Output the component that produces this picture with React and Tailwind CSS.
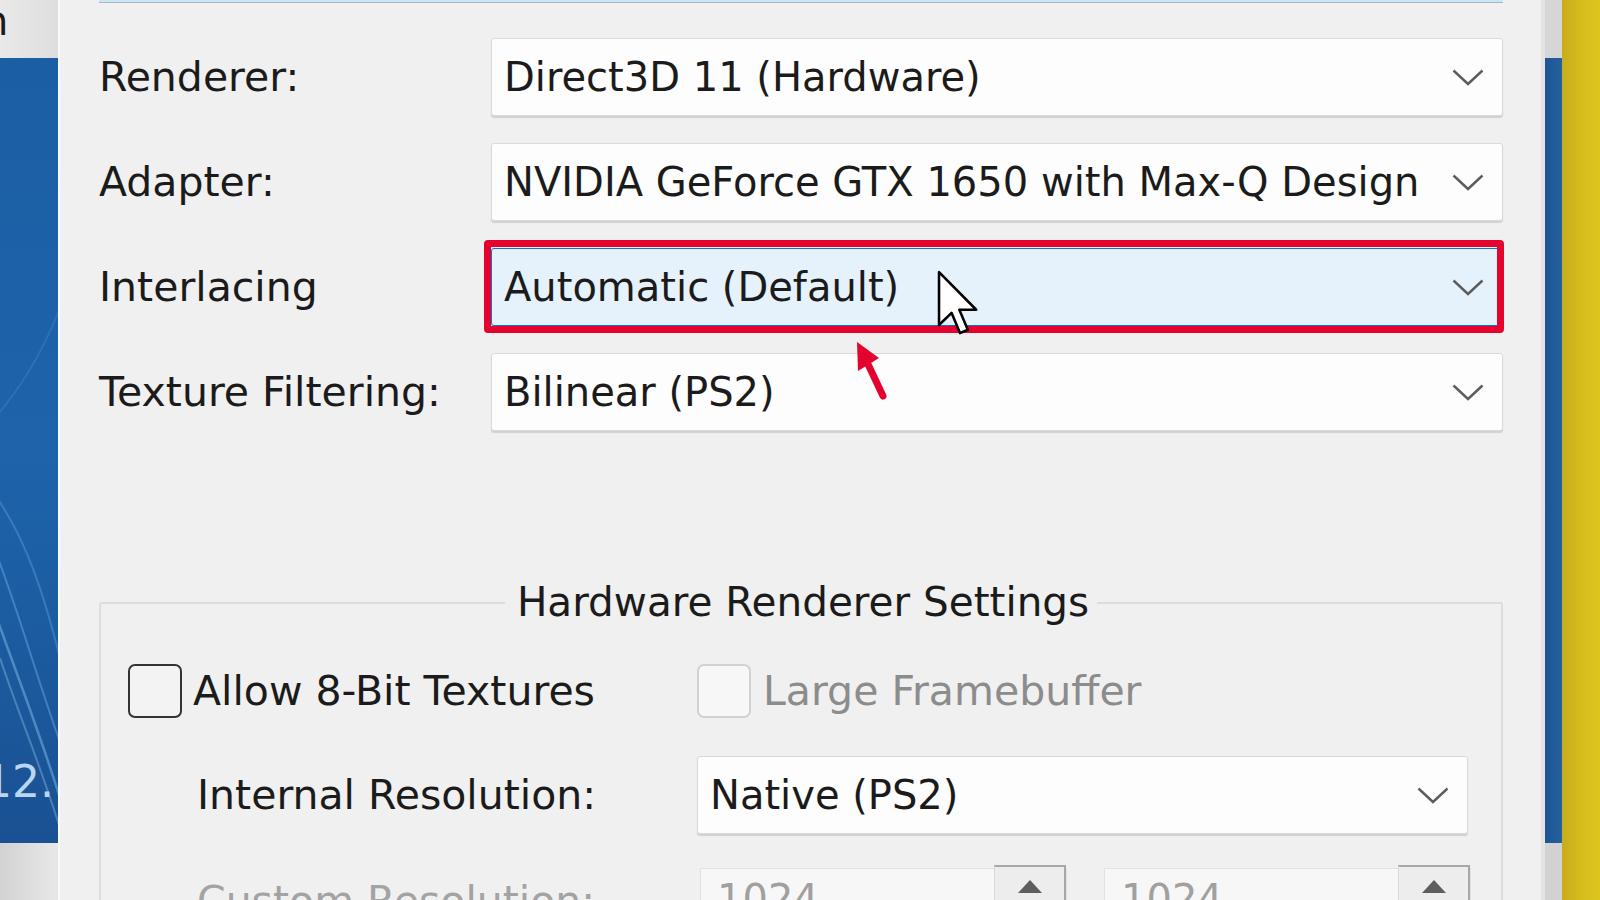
import React from "react";

function Chevron() {
  return (
    <svg width="32" height="17" viewBox="0 0 32 17" className="shrink-0">
      <path d="M1.5 1.5 L16 15 L30.5 1.5" fill="none" stroke="#5c5c5c" strokeWidth="2.4" />
    </svg>
  );
}

function Combo({ value, hovered, children }) {
  const base =
    "relative flex h-[78px] flex-1 items-center rounded-[3px] border pl-[12px] pr-[18px] text-[40px] shadow-[0_2px_1px_rgba(0,0,0,0.13)]";
  const skin = hovered
    ? "z-10 bg-[#e5f1fb] border-[#0078d7]"
    : "bg-[#fdfdfd] border-[#dadada]";
  return (
    <div className={`${base} ${skin}`}>
      <span className="flex-1 whitespace-nowrap">{value}</span>
      <Chevron />
      {children}
    </div>
  );
}

function Pointer() {
  return (
    <svg width="44" height="68" viewBox="0 0 13 20" className="absolute left-[445px] top-[21px] z-20">
      <path
        d="M0.6 0.6 L0.6 16.2 L4.3 12.6 L6.8 18.6 L9.1 17.6 L6.6 11.7 L11.6 11.7 Z"
        fill="#ffffff"
        stroke="#000000"
        strokeWidth="0.75"
        strokeLinejoin="round"
      />
    </svg>
  );
}

function RedArrow() {
  return (
    <svg width="50" height="62" viewBox="0 0 50 62" className="absolute left-[350px] top-[91px] z-20">
      <line x1="25" y1="22" x2="41" y2="56" stroke="#e4032e" strokeWidth="7" strokeLinecap="round" />
      <polygon points="15,2 37,18 16,31" fill="#e4032e" />
    </svg>
  );
}

function CheckBox({ label, disabled }) {
  return (
    <div className="flex items-center">
      <div
        className={
          disabled
            ? "h-[54px] w-[54px] shrink-0 rounded-[7px] border-2 border-[#d2d2d2] bg-[#f7f7f7]"
            : "h-[54px] w-[54px] shrink-0 rounded-[7px] border-[2.5px] border-[#333333] bg-[#f3f3f3]"
        }
      />
      <span className={disabled ? "ml-[12px] text-[#8c8c8c]" : "ml-[11px]"}>{label}</span>
    </div>
  );
}

function SpinBox() {
  return (
    <div className="mt-[3px] flex h-[70px] w-[367px] border border-[#e2e2e2] bg-[#f7f7f7] text-[40px]">
      <span className="flex-1 pl-[16px] pt-[6px] text-[#a0a0a0]">1024</span>
      <div className="-mt-[4px] flex h-[40px] w-[72px] justify-center border-l border-r-2 border-t-2 border-[#a8a8a8] border-l-[#d8d8d8] bg-[#ededed] pt-[13px]">
        <svg width="24" height="13" viewBox="0 0 24 13">
          <polygon points="12,0 24,13 0,13" fill="#5e5e5e" />
        </svg>
      </div>
    </div>
  );
}

function LeftEdge() {
  return (
    <div className="flex h-full w-[58px] shrink-0 flex-col">
      <div className="h-[58px] overflow-hidden bg-gradient-to-r from-[#e9e9e9] to-[#dedede]">
        <span className="-ml-[17px] block text-[40px] leading-[42px] text-[#1b1b1b]">n</span>
      </div>
      <div className="relative flex-1 overflow-hidden bg-gradient-to-b from-[#1c5ea4] via-[#1d64ab] to-[#1a5193]">
        <svg width="58" height="785" viewBox="0 0 58 785" className="absolute inset-0">
          <path d="M-10 430 C 20 470, 40 520, 60 600" fill="none" stroke="#6fb0e6" strokeOpacity="0.35" strokeWidth="2" />
          <path d="M-10 480 C 15 540, 30 600, 62 690" fill="none" stroke="#7cbbee" strokeOpacity="0.4" strokeWidth="2" />
          <path d="M-10 540 C 10 600, 35 660, 60 740" fill="none" stroke="#8cc6f2" strokeOpacity="0.45" strokeWidth="2.5" />
          <path d="M0 600 C 20 660, 38 700, 60 770" fill="none" stroke="#a0d2f6" strokeOpacity="0.35" strokeWidth="2" />
          <path d="M60 250 C 40 300, 20 330, -5 360" fill="none" stroke="#5a9bd6" strokeOpacity="0.25" strokeWidth="2" />
        </svg>
        <span className="absolute -left-[16px] top-[700px] text-[44px] leading-[47px] text-[#b8d6f1]">12.</span>
      </div>
      <div className="h-[57px] bg-gradient-to-r from-[#d2d2d2] to-[#e8e8e8]" />
    </div>
  );
}

function RightEdge() {
  return (
    <div className="flex h-full w-[59px] shrink-0">
      <div className="w-[4px] bg-[#e3e3e3]" />
      <div className="flex w-[17px] flex-col">
        <div className="h-[58px] bg-[#d6d6d6]" />
        <div className="flex-1 bg-gradient-to-r from-[#1e5593] to-[#24609f]" />
        <div className="h-[57px] bg-[#d2d2d2]" />
      </div>
      <div className="flex-1 bg-gradient-to-r from-[#c8ab1c] via-[#d6bd1e] to-[#ddc521]" />
    </div>
  );
}

export default function App() {
  const rows = [
    { label: "Renderer:", value: "Direct3D 11 (Hardware)" },
    { label: "Adapter:", value: "NVIDIA GeForce GTX 1650 with Max-Q Design" },
    { label: "Interlacing", value: "Automatic (Default)", hovered: true },
    { label: "Texture Filtering:", value: "Bilinear (PS2)" },
  ];

  return (
    <div className="flex h-[900px] w-[1600px] overflow-hidden bg-[#f0f0f0] font-['DejaVu_Sans',Verdana,sans-serif] text-[41px] leading-[49px] text-[#1b1b1b]">
      <LeftEdge />

      <div className="flex min-w-0 flex-1 flex-col border-l-2 border-[#fafafa] bg-[#f0f0f0] pl-[39px] pr-[38px]">
        <div className="h-[3px] shrink-0 border-b border-[#aab7c1] bg-[#cbe7f7]" />

        <div className="mt-[35px] flex flex-col gap-[27px]">
          {rows.map((r) => (
            <div key={r.label} className="flex h-[78px] items-center">
              <div className="w-[392px] shrink-0 whitespace-nowrap">{r.label}</div>
              <Combo value={r.value} hovered={r.hovered}>
                {r.hovered && (
                  <>
                    <div className="pointer-events-none absolute -bottom-[8px] -left-[8px] -right-[2px] -top-[9px] rounded-[4px] border-[7px] border-[#e4032e]" />
                    <Pointer />
                    <RedArrow />
                  </>
                )}
              </Combo>
            </div>
          ))}
        </div>

        {/* Hardware Renderer Settings group */}
        <div className="mt-[147px] flex shrink-0">
          <div className="mt-[24px] flex-1 rounded-tl-[3px] border-l-2 border-t-2 border-[#dcdcdc]" />
          <div className="whitespace-nowrap pl-[12px] pr-[8px] text-[40.5px]">Hardware Renderer Settings</div>
          <div className="mt-[24px] flex-1 rounded-tr-[3px] border-r-2 border-t-2 border-[#dcdcdc]" />
        </div>
        <div className="flex flex-1 flex-col border-x-2 border-[#dcdcdc] pl-[27px] pr-[33px]">
          <div className="mt-[37px] flex h-[54px]">
            <div className="w-[569px] shrink-0">
              <CheckBox label="Allow 8-Bit Textures" />
            </div>
            <CheckBox label="Large Framebuffer" disabled />
          </div>

          <div className="mt-[38px] flex items-center">
            <div className="w-[569px] shrink-0 pl-[69px]">Internal Resolution:</div>
            <div className="flex flex-1">
              <Combo value="Native (PS2)" />
            </div>
          </div>

          <div className="mt-[31px] flex items-start">
            <div className="w-[569px] shrink-0 whitespace-nowrap pl-[69px] pt-[12px] text-[#a3a3a3]">
              Custom Resolution:
            </div>
            <div className="ml-[3px] flex gap-[37px]">
              <SpinBox />
              <SpinBox />
            </div>
          </div>
        </div>
      </div>

      <RightEdge />
    </div>
  );
}
